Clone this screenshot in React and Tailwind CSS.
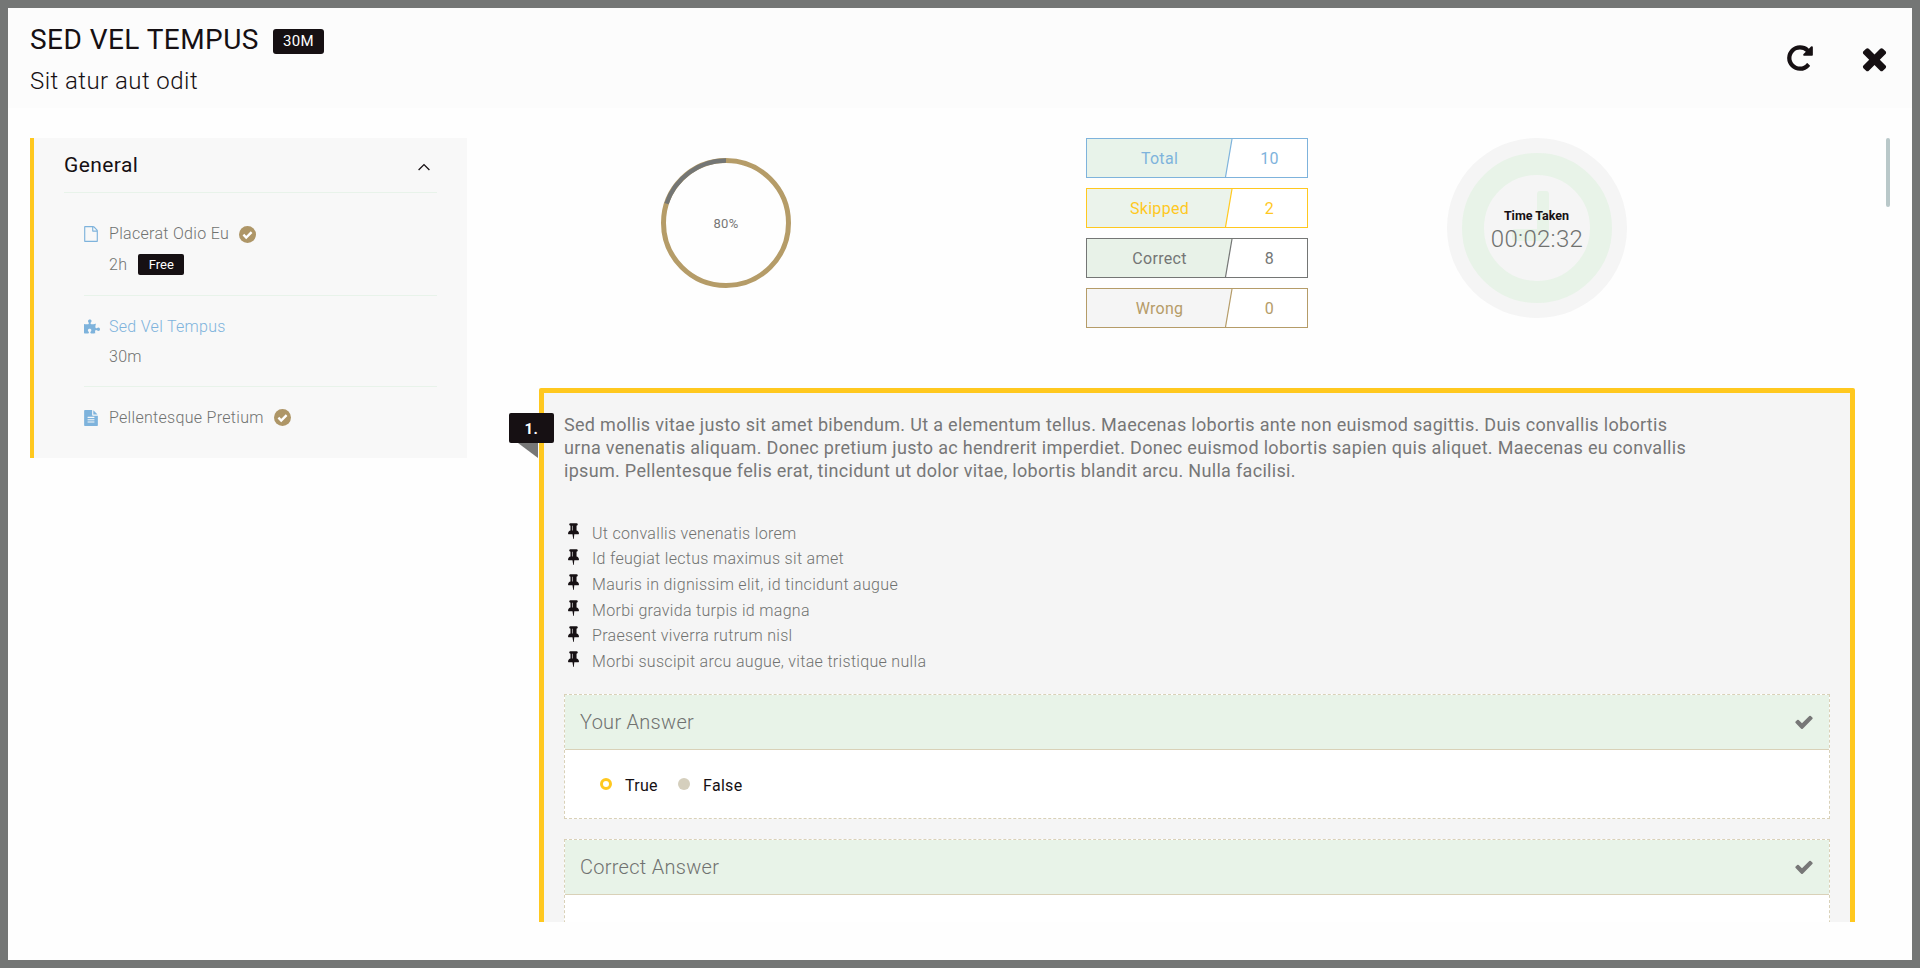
import React from "react";
import { FaPuzzlePiece } from "react-icons/fa";

const PATHS = {
  repeat:
    "M1664 256v448q0 26-19 45t-45 19h-448q-42 0-59-40-17-39 14-69l138-138q-148-137-349-137-104 0-198.500 40.500t-163.500 109.500-109.500 163.500-40.500 198.500 40.500 198.500 109.500 163.500 163.500 109.500 198.500 40.500q119 0 225-52t179-147q7-10 23-12 15 0 25 9l137 138q9 8 9.500 20.500t-7.500 22.500q-109 132-264 204.500t-327 72.500q-156 0-298-61t-245-164-164-245-61-298 61-298 164-245 245-164 298-61q147 0 284.500 55.500t244.500 156.500l130-129q29-31 70-14 39 17 39 59z",
  times:
    "M1490 1322q0 40-28 68l-136 136q-28 28-68 28t-68-28l-294-294-294 294q-28 28-68 28t-68-28l-136-136q-28-28-28-68t28-68l294-294-294-294q-28-28-28-68t28-68l136-136q28-28 68-28t68 28l294 294 294-294q28-28 68-28t68 28l136 136q28 28 28 68t-28 68l-294 294 294 294q28 28 28 68z",
  check:
    "M1671 566q0 40-28 68l-724 724-136 136q-28 28-68 28t-68-28l-136-136-362-362q-28-28-28-68t28-68l136-136q28-28 68-28t68 28l294 295 656-657q28-28 68-28t68 28l136 136q28 28 28 68z",
  file:
    "M1596 380q28 28 48 76t20 88v1152q0 40-28 68t-68 28h-1344q-40 0-68-28t-28-68v-1600q0-40 28-68t68-28h896q40 0 88 20t76 48zm-444-244v376h376q-10-29-22-41l-313-313q-12-12-41-22zm384 1528v-1024h-416q-40 0-68-28t-28-68v-416h-768v1536h1280z",
  fileText:
    "M1596 476q14 14 28 36h-472v-472q22 14 36 28zm-476 164h544v1056q0 40-28 68t-68 28h-1344q-40 0-68-28t-28-68v-1600q0-40 28-68t68-28h800v544q0 40 28 68t68 28zm160 736v-64q0-14-9-23t-23-9h-704q-14 0-23 9t-9 23v64q0 14 9 23t23 9h704q14 0 23-9t9-23zm0-256v-64q0-14-9-23t-23-9h-704q-14 0-23 9t-9 23v64q0 14 9 23t23 9h704q14 0 23-9t9-23zm0-256v-64q0-14-9-23t-23-9h-704q-14 0-23 9t-9 23v64q0 14 9 23t23 9h704q14 0 23-9t9-23z",
  pin:
    "M800 864v-448q0-14-9-23t-23-9-23 9-9 23v448q0 14 9 23t23 9 23-9 9-23zm672 352q0 26-19 45t-45 19h-429l-51 483q-2 12-10.500 20.500t-20.500 8.500h-1q-27 0-32-27l-76-485h-404q-26 0-45-19t-19-45q0-123 78.500-221.500t177.500-98.500v-512q-52 0-90-38t-38-90 38-90 90-38h640q52 0 90 38t38 90-38 90-90 38v512q99 0 177.500 98.500t78.500 221.500z",
};

function Icon({ name, className }) {
  return (
    <svg viewBox="0 0 1792 1792" fill="currentColor" className={className}>
      <path d={PATHS[name]} />
    </svg>
  );
}

function DoneMark() {
  return (
    <svg viewBox="0 0 17 17" className="size-[17px] shrink-0">
      <circle cx="8.500" cy="8.500" r="8.500" fill="#ae9667" />
      <path d="M4.400 8.700l2.800 2.800 5.400-5.400" fill="none" stroke="#fff" strokeWidth="2.400" />
    </svg>
  );
}

function Header() {
  return (
    <header className="flex h-[100px] shrink-0 justify-between bg-[#fcfcfc] pl-[22px] pr-5">
      <div className="pt-[14px]">
        <div className="flex h-9 items-center gap-[14px]">
          <h1 className="text-[28px] leading-9 tracking-[0.45px] text-[#161013]">SED VEL TEMPUS</h1>
          <span className="mt-[3px] flex h-[25px] w-[51px] items-center justify-center rounded-[3px] bg-[#161013] text-[15px] tracking-[0.3px] text-white">
            30M
          </span>
        </div>
        <p className="mt-[6px] text-[24px] font-light leading-[34px] tracking-[0.45px] text-[#161013]">Sit atur aut odit</p>
      </div>
      <div className="flex gap-[42px] pt-[35px] text-[#161013]">
        <Icon name="repeat" className="h-[30px] w-[30px]" />
        <Icon name="times" className="-mt-0.5 h-[35px] w-[35px]" />
      </div>
    </header>
  );
}

function Sidebar() {
  return (
    <aside className="h-[320px] w-[437px] shrink-0 border-l-4 border-[#ffc81f] bg-[#f8f8f8] pl-[30px] pr-[30px]">
      <div className="flex h-[55px] items-center justify-between border-b border-[#e8f3ea] pr-[7px]">
        <h2 className="text-[21px] leading-7 tracking-[0.4px] text-[#161013]">General</h2>
        <svg viewBox="0 0 12 8" className="mt-[4px] h-2 w-3" fill="none" stroke="#161013" strokeWidth="1.300">
          <path d="M0.600 7L6 1.600L11.400 7" />
        </svg>
      </div>
      <ul className="pl-5 text-[16px] font-light leading-[25px] tracking-[0.3px] text-[#707270]">
        <li className="h-[103px] border-b border-[#e8f3ea] pt-[28px]">
          <div className="flex items-center">
            <Icon name="file" className="-ml-px h-4 w-4 text-[#7eb3dc]" />
            <span className="ml-[10px]">Placerat Odio Eu</span>
            <span className="ml-[10px] mt-[2px] h-[17px]"><DoneMark /></span>
          </div>
          <div className="ml-[25px] mt-[6px] flex items-center">
            <span>2h</span>
            <span className="ml-[11px] flex h-[21px] w-[46px] items-center justify-center rounded-[2px] bg-[#161013] text-[13px] font-normal tracking-normal text-white">
              Free
            </span>
          </div>
        </li>
        <li className="h-[91px] border-b border-[#e8f3ea] pt-[18px]">
          <div className="flex items-center text-[#7eb3dc]">
            <FaPuzzlePiece className="h-[15px] w-4" />
            <span className="ml-[9px]">Sed Vel Tempus</span>
          </div>
          <div className="ml-[25px] mt-[5px]">30m</div>
        </li>
        <li className="pt-[18px]">
          <div className="flex items-center">
            <Icon name="fileText" className="-ml-px h-4 w-4 text-[#7eb3dc]" />
            <span className="ml-[10px]">Pellentesque Pretium</span>
            <span className="ml-[10px] h-[17px]"><DoneMark /></span>
          </div>
        </li>
      </ul>
    </aside>
  );
}

function ScoreRing() {
  return (
    <svg viewBox="0 0 130 130" className="mt-5 h-[130px] w-[130px]">
      <circle cx="65" cy="65" r="62.500" fill="none" stroke="#b59c68" strokeWidth="5" />
      <path d="M5.560 45.690A62.500 62.500 0 0 1 65 2.500" fill="none" stroke="#747675" strokeWidth="4.400" />
      <text x="65" y="70" textAnchor="middle" fontSize="13" letterSpacing="0.300" fill="#777">80%</text>
    </svg>
  );
}

const STATS = [
  { label: "Total", value: 10, color: "#7eb3dc", fill: "#e8f3ea" },
  { label: "Skipped", value: 2, color: "#ffc81f", fill: "#ebf3eb" },
  { label: "Correct", value: 8, color: "#747675", fill: "#e8f2e8" },
  { label: "Wrong", value: 0, color: "#b59c68", fill: "#f5f5f5" },
];

function Stats() {
  return (
    <div className="flex w-[222px] flex-col gap-[10px]">
      {STATS.map((s) => (
        <div key={s.label} className="relative h-10 border bg-white" style={{ borderColor: s.color, color: s.color }}>
          <svg viewBox="0 0 146 38" className="absolute left-0 top-0 h-[38px] w-[146px]">
            <path d="M0 0H145L138.500 38H0Z" fill={s.fill} />
            <path d="M145 0L138.500 38" stroke={s.color} fill="none" strokeWidth="1.200" />
          </svg>
          <div className="relative flex h-full items-center pt-0.5 text-base leading-none tracking-[0.3px]">
            <span className="w-[145px] text-center">{s.label}</span>
            <span className="w-[75px] text-center">{s.value}</span>
          </div>
        </div>
      ))}
    </div>
  );
}

function Timer() {
  return (
    <svg viewBox="0 0 180 180" className="h-[180px] w-[180px]">
      <circle cx="90" cy="90" r="90" fill="#f5f5f5" />
      <circle cx="90" cy="90" r="64" fill="none" stroke="#e8f3e8" strokeWidth="22" />
      <path d="M93 53h6q3 0 3 3v44q0 3-3 3H68q-3 0-3-3v-6q0-3 3-3h22V56q0-3 3-3z" fill="#e8f3e8" />
      <text x="89.500" y="82" textAnchor="middle" fontSize="12.500" fontWeight="700" fill="#161013">Time Taken</text>
      <text x="90" y="109" textAnchor="middle" fontSize="24" fontWeight="300" letterSpacing="0.300" fill="#707270">00:02:32</text>
    </svg>
  );
}

const POINTS = [
  "Ut convallis venenatis lorem",
  "Id feugiat lectus maximus sit amet",
  "Mauris in dignissim elit, id tincidunt augue",
  "Morbi gravida turpis id magna",
  "Praesent viverra rutrum nisl",
  "Morbi suscipit arcu augue, vitae tristique nulla",
];

function AnswerBox({ title, children }) {
  return (
    <div className="h-[125px] border border-dashed border-[#d9d1b8] bg-white">
      <div className="flex h-[55px] items-center justify-between border-b border-[#d9d1b8] bg-[#e8f3e8] pl-[15px] pr-[15px]">
        <h3 className="text-[20px] font-light leading-7 tracking-[0.28px] text-[#707270]">{title}</h3>
        <Icon name="check" className="h-5 w-5 text-[#777]" />
      </div>
      {children}
    </div>
  );
}

function Question() {
  return (
    <section className="relative ml-[22px] mt-[60px] h-[700px] w-[1316px] shrink-0 rounded-t-[2px] border-[5px] border-[#ffc81f] bg-[#f5f5f5] px-5">
      <div className="absolute -left-[35px] top-5 flex h-[30px] w-[45px] items-center justify-center rounded-[2px] bg-[#161013] pt-0.5 text-[15px] font-bold tracking-[0.5px] text-white">
        1.
      </div>
      <svg viewBox="0 0 20 15" className="absolute -left-[26px] top-[50px] h-[15px] w-5">
        <path d="M0 0H20V15Z" fill="#777" />
      </svg>
      <div className="pt-5 text-[18px] leading-[23px] tracking-[0.31px] text-[#777] whitespace-nowrap">
        <p>Sed mollis vitae justo sit amet bibendum. Ut a elementum tellus. Maecenas lobortis ante non euismod sagittis. Duis convallis lobortis</p>
        <p>urna venenatis aliquam. Donec pretium justo ac hendrerit imperdiet. Donec euismod lobortis sapien quis aliquet. Maecenas eu convallis</p>
        <p>ipsum. Pellentesque felis erat, tincidunt ut dolor vitae, lobortis blandit arcu. Nulla facilisi.</p>
      </div>
      <ul className="mt-[39px] h-[173px] text-[16px] font-light tracking-[0.31px] text-[#707270]">
        {POINTS.map((p) => (
          <li key={p} className="flex h-[25.6px] items-center">
            <Icon name="pin" className="-mt-[6px] ml-px h-[17px] w-[17px] text-[#161013]" />
            <span className="ml-[10px]">{p}</span>
          </li>
        ))}
      </ul>
      <AnswerBox title="Your Answer">
        <div className="flex h-[68px] items-center pl-[35px] text-[16px] tracking-[0.3px] text-[#161013]">
          <span className="h-3 w-3 rounded-full border-[3px] border-[#ffc81f]" />
          <span className="ml-[13px] mt-[3px] w-[33px]">True</span>
          <span className="ml-5 h-3 w-3 rounded-full bg-[#d5cfbd]" />
          <span className="ml-[13px] mt-[3px]">False</span>
        </div>
      </AnswerBox>
      <div className="h-5" />
      <AnswerBox title="Correct Answer" />
    </section>
  );
}

export default function App() {
  return (
    <div className="flex h-[968px] w-[1920px] flex-col overflow-hidden border-8 border-[#747675] bg-[#fefefe] font-[Roboto,sans-serif]">
      <Header />
      <div className="flex h-[814px] shrink-0 gap-[42px] overflow-hidden pl-[22px] pt-[30px]">
        <Sidebar />
        <main className="h-[784px] w-[1356px] overflow-hidden pl-2">
          <div className="flex h-[190px] pl-[144px]">
            <ScoreRing />
            <div className="ml-[295px]"><Stats /></div>
            <div className="ml-[139px]"><Timer /></div>
          </div>
          <Question />
        </main>
        <div className="-ml-[21px] h-[69px] w-1 shrink-0 rounded-full bg-[#b9c8c9]" />
      </div>
    </div>
  );
}
